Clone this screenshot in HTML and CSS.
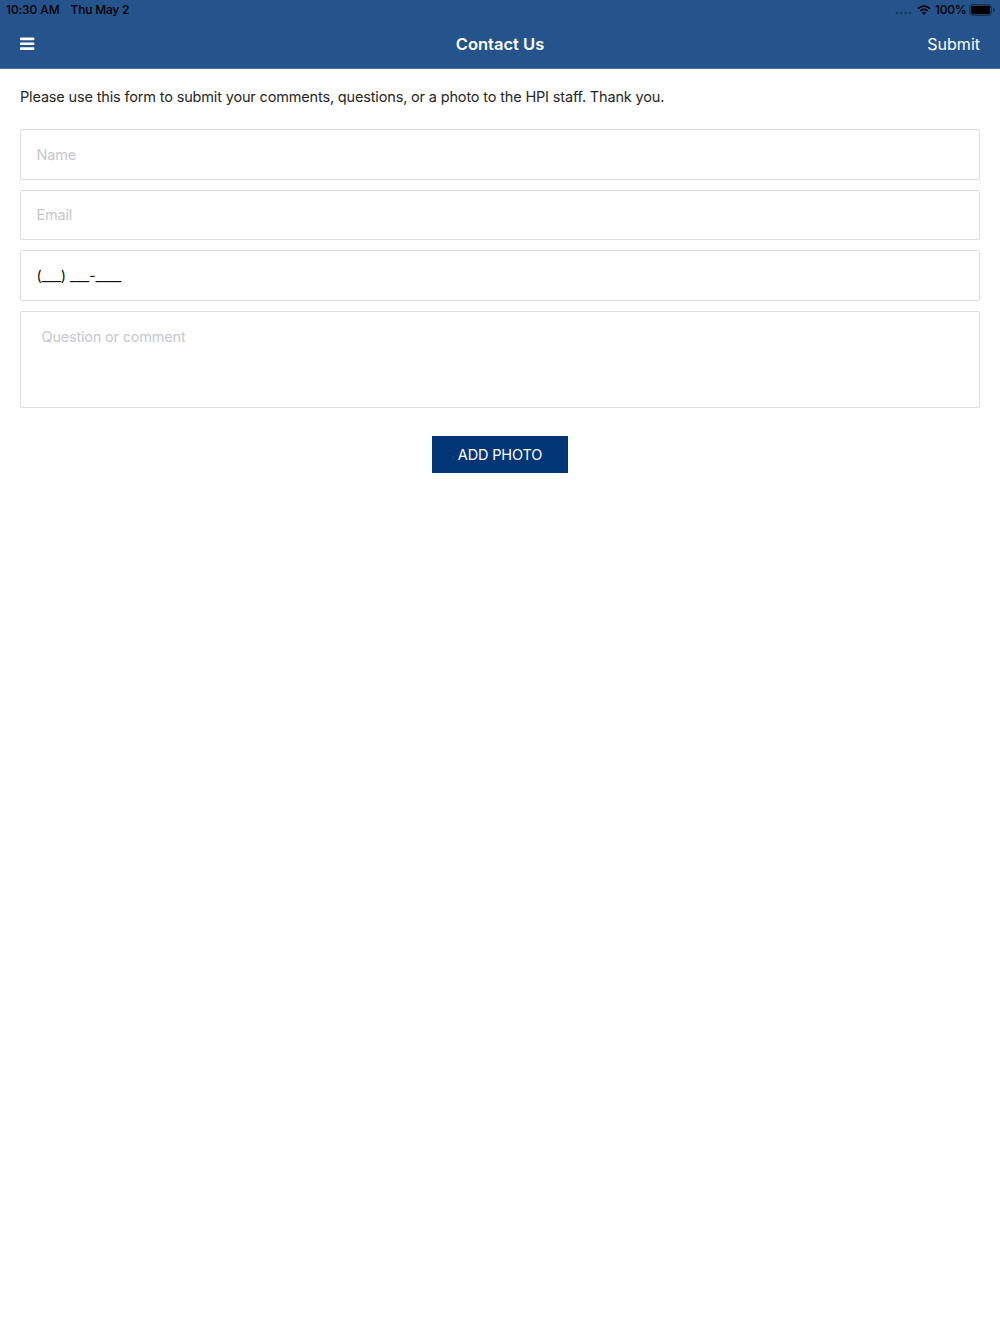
FILE: index.html
```
<!DOCTYPE html>
<html lang="en">
<head>
  <meta charset="UTF-8" />
  <title>Contact Us</title>
  <link rel="stylesheet" href="styles.css">
</head>
<body>

  <header class="header">
    <div class="status-bar">
      <div class="status-left">
        <span class="time">10:30 AM</span>
        <span class="date">Thu May 2</span>
      </div>
      <div class="status-right">
        <svg class="signal" width="17" height="4" viewBox="0 0 17 4">
          <circle cx="2" cy="2" r="1.5" />
          <circle cx="6.3" cy="2" r="1.5" />
          <circle cx="10.6" cy="2" r="1.5" />
          <circle cx="14.9" cy="2" r="1.5" />
        </svg>
        <svg class="wifi" width="14" height="10" viewBox="0 0 14 10">
          <path d="M1 3.6a8.6 8.6 0 0 1 12 0M3.2 5.9a5.5 5.5 0 0 1 7.6 0" fill="none" stroke="#000" stroke-width="1.7" />
          <path d="M7 9.8L4.9 7.7a3 3 0 0 1 4.2 0z" />
        </svg>
        <span class="percent">100%</span>
        <svg class="battery" width="26" height="12" viewBox="0 0 26 12">
          <rect x=".5" y=".5" width="22" height="11" rx="2.8" fill="none" stroke="#000" stroke-opacity=".4" />
          <rect x="1.8" y="1.8" width="19.4" height="8.4" rx="1.4" />
          <path d="M24 4v4a2 2 0 0 0 0-4z" fill-opacity=".4" />
        </svg>
      </div>
    </div>
    <nav class="nav-bar">
      <button class="menu" type="button" aria-label="Menu">
        <svg width="15" height="14" viewBox="0 0 15 14">
          <rect x="0" y=".6" width="14.3" height="2.7" rx=".7" />
          <rect x="0" y="5.4" width="14.3" height="2.7" rx=".7" />
          <rect x="0" y="10.2" width="14.3" height="2.7" rx=".7" />
        </svg>
      </button>
      <h1>Contact Us</h1>
      <button class="submit" type="submit" form="contact-form">Submit</button>
    </nav>
  </header>

  <form class="contact-form" id="contact-form">
    <p>Please use this form to submit your comments, questions, or a photo to the HPI staff. Thank you.</p>
    <input class="field" type="text" placeholder="Name">
    <input class="field" type="email" placeholder="Email">
    <input class="field phone" type="tel" value="(___) ___-____">
    <textarea class="field comment" placeholder="Question or comment"></textarea>
    <button class="add-photo" type="button">ADD PHOTO</button>
  </form>

</body>
</html>
```

FILE: styles.css
```
* {
  box-sizing: border-box;
}

body {
  margin: 0;
  background: #fff;
  color: #262626;
  font-family: Inter, "Liberation Sans", sans-serif;
}

button {
  border: none;
  background: none;
  font-family: inherit;
  cursor: pointer;
}

.header {
  height: 69px;
  background: #25538b;
  border-bottom: 1px solid #49709f;
}

.status-bar {
  display: flex;
  justify-content: space-between;
  align-items: center;
  height: 20px;
  padding: 0 5px 1px 6px;
  color: #000;
  font-size: 12px;
  font-weight: 500;
}

.status-left {
  display: flex;
  gap: 11px;
}

.time {
  letter-spacing: -.1px;
}

.date {
  letter-spacing: -.2px;
}

.status-right {
  display: flex;
  align-items: center;
}

.signal {
  margin: 7px 5px 0 0;
  fill: #000;
  fill-opacity: .25;
}

.wifi {
  margin-right: 4px;
}

.percent {
  margin-right: 2.5px;
  letter-spacing: -.2px;
}

.nav-bar {
  display: grid;
  grid-template-columns: 1fr auto 1fr;
  align-items: center;
  height: 48px;
  padding: 0 20px;
  color: #fff;
}

.nav-bar h1 {
  margin: 0;
  font-size: 16.5px;
  font-weight: 600;
}

.menu {
  display: flex;
  width: 15px;
  padding: 0;
}

.menu svg {
  fill: #fff;
}

.submit {
  justify-self: end;
  padding: 0;
  color: #fff;
  font-size: 16px;
}

.contact-form {
  display: flex;
  flex-direction: column;
  gap: 10px;
  padding: 18px 20px;
}

.contact-form p {
  margin: 0 0 12px;
  font-size: 14.5px;
  line-height: 20px;
  letter-spacing: -.16px;
}

.field {
  width: 100%;
  height: 50.5px;
  padding: 0 15.5px;
  border: 1px solid #dedede;
  border-radius: 2px;
  background: #fff;
  color: #111;
  font-family: inherit;
  font-size: 14.5px;
  letter-spacing: -.2px;
}

.field::placeholder {
  color: #c7c7cb;
}

.comment {
  display: block;
  height: 97.5px;
  padding: 16px 20.5px;
  line-height: 18px;
  resize: none;
}

.add-photo {
  align-self: center;
  width: 136.5px;
  height: 37px;
  margin-top: 17.5px;
  padding: 0;
  background: #003676;
  color: #fff;
  font-size: 14.5px;
  letter-spacing: -.15px;
}
```
